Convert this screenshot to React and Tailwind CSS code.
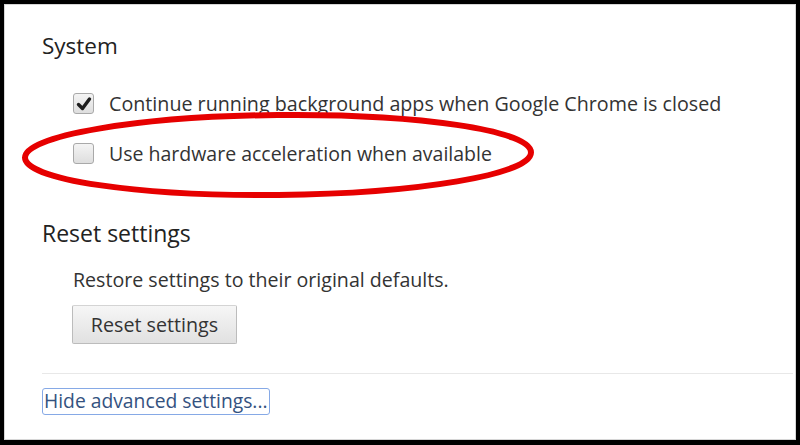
import React from "react";

const font = { fontFamily: '"Open Sans", "Noto Sans", sans-serif' };

const CheckBox = ({ checked }) => (
    <span className="relative w-[21px] h-[21px] shrink-0 rounded-[3px] border border-[#a9a9a9] bg-gradient-to-b from-[#f4f4f4] to-[#dedede]">
        {checked && (
            <svg className="absolute left-[2px] top-[2px]" width="16" height="16" viewBox="0 0 16 16">
                <path d="M2.5 8.5 L6.5 12.5 L13.5 3" fill="none" stroke="#1e1e1e" strokeWidth="3.4" strokeLinecap="round" strokeLinejoin="round" />
            </svg>
        )}
    </span>
);

const App = () => {
    return (
        <div className="w-[800px] h-[445px] bg-black pt-[4px] pl-[4px] pr-[4px] pb-[5px]" style={font}>
            <div className="relative w-full h-full bg-white border border-[#d6d6d6] pl-[37px] pt-[26px] text-[#333]">
                <h2 className="text-[22.5px] leading-[30px] text-[#222]">System</h2>

                <div className="mt-[32px] ml-[31px] flex flex-col gap-[29px]">
                    <label className="flex items-center gap-[15px] h-[21px] text-[19.7px]">
                        <CheckBox checked />
                        <span>Continue running background apps when Google Chrome is closed</span>
                    </label>
                    <label className="flex items-center gap-[15px] h-[21px] text-[19.5px]">
                        <CheckBox />
                        <span>Use hardware acceleration when available</span>
                    </label>
                </div>

                <h2 className="mt-[54px] text-[23px] leading-[30px] text-[#222]">Reset settings</h2>
                <p className="mt-[19px] ml-[31px] text-[19.6px] leading-[26px]">Restore settings to their original defaults.</p>
                <button className="mt-[12px] ml-[30px] w-[165px] h-[39px] border border-[#bcbcbc] border-t-[#d4d4d4] rounded-[2px] bg-gradient-to-b from-[#f6f6f6] to-[#e1e1e1] text-[19.7px] text-[#333]">
                    Reset settings
                </button>

                <div className="mt-[29px] mr-[2px] border-t border-[#e8e8e8]" />

                <div className="mt-[14px]">
                    <a className="inline-block px-[1px] h-[27px] leading-[24px] border-[1.5px] border-[#86a9e6] rounded-[3px] text-[19.3px] text-[#34527f]">
                        Hide advanced settings...
                    </a>
                </div>

                <svg className="absolute left-0 top-0 pointer-events-none" width="796" height="440">
                    <ellipse cx="273" cy="150" rx="253" ry="40" fill="none" stroke="#e60000" strokeWidth="6" transform="rotate(-0.6 273 150)" />
                </svg>
            </div>
        </div>
    );
};

export default App;
